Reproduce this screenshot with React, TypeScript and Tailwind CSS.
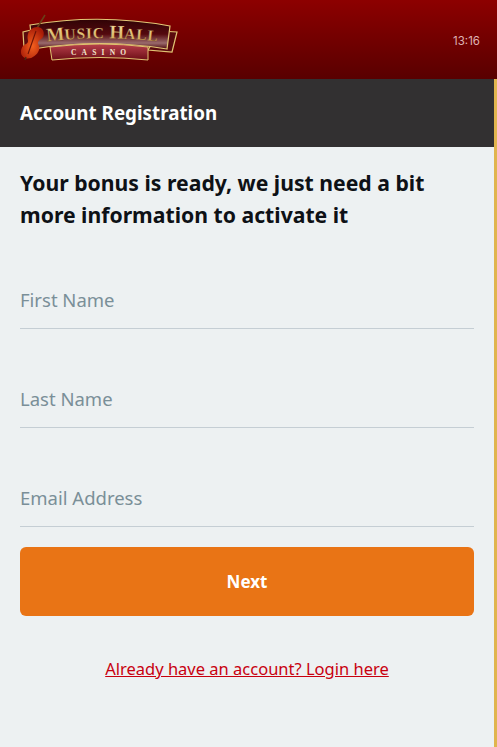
const Logo = () => (
  <svg width="160" height="50" viewBox="20 13 160 50" className="block">
    <defs>
      <linearGradient id="band" x1="0" y1="0" x2="0" y2="1">
        <stop offset="0" stopColor="#2f0306" />
        <stop offset="0.5" stopColor="#54090e" />
        <stop offset="0.8" stopColor="#9a6a6c" />
        <stop offset="1" stopColor="#4a070c" />
      </linearGradient>
      <linearGradient id="plate" x1="0" y1="0" x2="0" y2="1">
        <stop offset="0" stopColor="#b8404c" />
        <stop offset="1" stopColor="#6d0e16" />
      </linearGradient>
      <linearGradient id="gold" x1="0" y1="0" x2="0" y2="1">
        <stop offset="0" stopColor="#f8e7a8" />
        <stop offset="1" stopColor="#c89c48" />
      </linearGradient>
      <radialGradient id="violin" cx="0.5" cy="0.6" r="0.6">
        <stop offset="0" stopColor="#f4601e" />
        <stop offset="1" stopColor="#a81c08" />
      </radialGradient>
      <path id="arc" d="M47 41.5 Q102 35 160 41.5" />
    </defs>
    {/* side tabs */}
    <path d="M31 30 L23 32 L24 48 L36 49 Z" fill="#5a0a0e" stroke="#e0c373" strokeWidth="1.2" />
    <path d="M160 31 L177 32 L172 52 L148 50 Z" fill="#5a0a0e" stroke="#e0c373" strokeWidth="1.2" />
    {/* main band */}
    <path d="M30 25 Q100 13 170 26 L167 49 Q100 38 33 49 Z" fill="url(#band)" stroke="#e3c877" strokeWidth="1.2" />
    {/* casino plate */}
    <path d="M50 47 Q100 41 148 47 L148 60 Q100 55 52 60 Z" fill="url(#plate)" stroke="#e0c373" strokeWidth="1" />
    <text fill="url(#gold)" fontFamily="'Liberation Serif', serif" fontWeight="700" stroke="#3a0406" strokeWidth="0.2">
      <textPath href="#arc">
        <tspan fontSize="19">M</tspan>
        <tspan fontSize="15.5" letterSpacing="0.7">USIC </tspan>
        <tspan fontSize="19">H</tspan>
        <tspan fontSize="15.5" letterSpacing="0.7">ALL</tspan>
      </textPath>
    </text>
    <text x="71" y="54.5" fill="#f3e6cf" fontSize="7.5" fontFamily="'Liberation Serif', serif" fontWeight="700" letterSpacing="5.2">
      CASINO
    </text>
    {/* violin */}
    <path d="M31 38 L45 15" stroke="#6a4018" strokeWidth="1.5" />
    <path
      d="M37 27 C43 27 45 33 43 37 C41 40 38 40 38 43 C38 45 40 46 39 50 C37 56 30 60 25 58 C20 56 20 50 23 46 C25 44 28 44 28 41 C28 39 27 38 28 34 C29 30 33 27 37 27 Z"
      fill="url(#violin)"
    />
    <path d="M36 31 L28 54" stroke="#6c1206" strokeWidth="1.1" />
    <path d="M26 57 L25 60" stroke="#4a2a12" strokeWidth="1.3" />
  </svg>
);

const Field = ({ label }: { label: string }) => (
  <div className="flex h-[99px] items-end">
    <div className="flex h-[56px] w-full items-center border-b border-[#c5ced4] pb-[1px] text-[18.5px] text-[#7a8f98]">
      {label}
    </div>
  </div>
);

export default function App() {
  return (
    <div className="flex h-[747px] w-[497px] flex-col overflow-hidden bg-[#edf1f2] font-['Noto_Sans',sans-serif]">
      {/* Top bar */}
      <header className="flex h-[79px] shrink-0 items-center justify-between bg-gradient-to-b from-[#8d0000] to-[#590000] pl-5 pr-[17px]">
        <div className="-mt-[3px]">
          <Logo />
        </div>
        <span className="mt-[5px] font-['Inter',sans-serif] text-[11.5px] text-[#dfb3b3]">13:16</span>
      </header>

      <div className="flex flex-1 flex-col border-r-[3px] border-[#e0b54e]">
        {/* Page title */}
        <div className="flex h-[68px] shrink-0 items-center bg-[#323031] px-5 text-[18.8px] font-bold text-white">
          Account Registration
        </div>

        <main className="flex flex-col px-5">
          <h1 className="mt-[20px] text-[21.2px] leading-[32px] font-bold text-[#0e1116]">
            Your bonus is ready, we just need a bit more information to activate it
          </h1>

          <div className="-mt-px flex flex-col">
            <Field label="First Name" />
            <Field label="Last Name" />
            <Field label="Email Address" />
          </div>

          <button className="mt-[20px] flex h-[69px] items-center justify-center rounded-[6px] bg-[#e97415] text-[17px] font-bold text-white">
            Next
          </button>

          <a className="mt-[41px] text-center text-[16.5px] text-[#c8000f] underline">
            Already have an account? Login here
          </a>
        </main>
      </div>
    </div>
  );
}
